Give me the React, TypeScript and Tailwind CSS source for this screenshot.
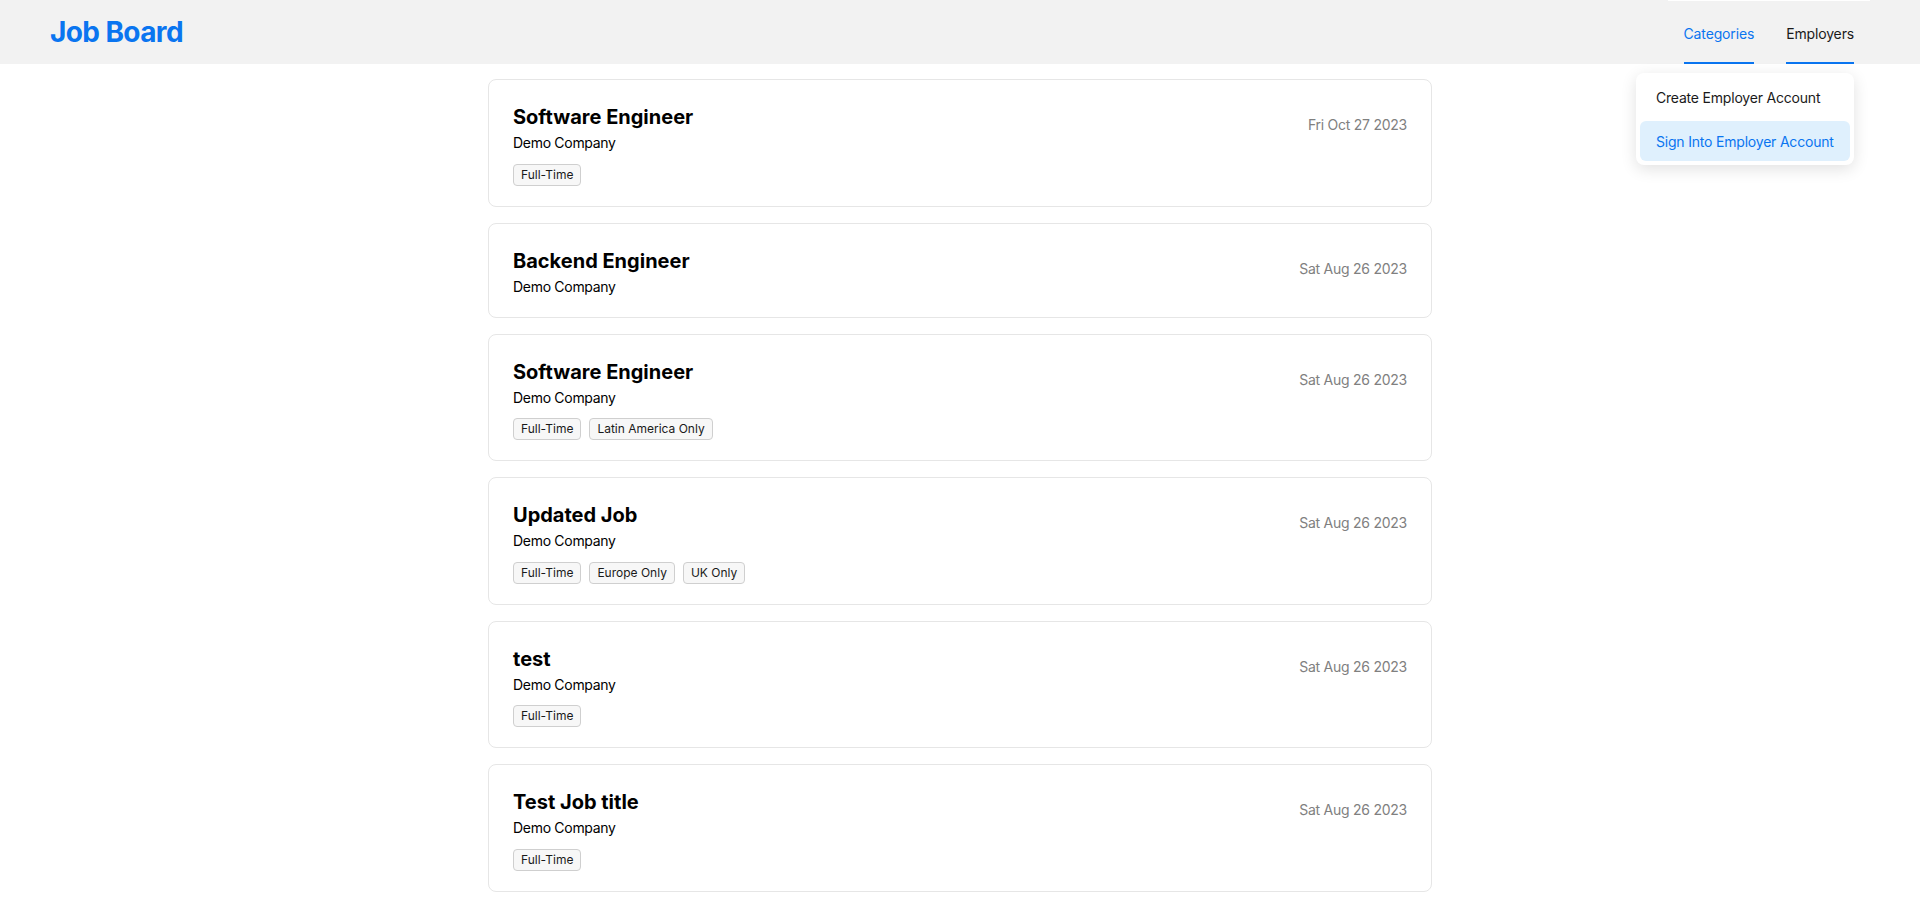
import React from "react";

type Job = { title: string; date: string; tags: string[] };

const jobs: Job[] = [
  { title: "Software Engineer", date: "Fri Oct 27 2023", tags: ["Full-Time"] },
  { title: "Backend Engineer", date: "Sat Aug 26 2023", tags: [] },
  { title: "Software Engineer", date: "Sat Aug 26 2023", tags: ["Full-Time", "Latin America Only"] },
  { title: "Updated Job", date: "Sat Aug 26 2023", tags: ["Full-Time", "Europe Only", "UK Only"] },
  { title: "test", date: "Sat Aug 26 2023", tags: ["Full-Time"] },
  { title: "Test Job title", date: "Sat Aug 26 2023", tags: ["Full-Time"] },
];

function JobCard({ job }: { job: Job }) {
  return (
    <div className="flex justify-between rounded-[8px] border border-[#e6e6e6] bg-white px-6 pt-[25px] pb-5">
      <div className="flex flex-col">
        <div className="text-[20px] leading-[24px] font-bold text-black">{job.title}</div>
        <div className="mt-[3px] text-[14px] leading-[21px] tracking-[-0.3px] text-black">Demo Company</div>
        {job.tags.length > 0 && (
          <div className="mt-[10.5px] flex gap-2">
            {job.tags.map((t, i) => (
              <span
                key={i}
                className="flex h-[22px] items-center rounded-[4px] border border-[#cfcfcf] bg-[#f7f7f7] px-[7px] text-[12px] text-[#1a1a1a]"
              >
                {t}
              </span>
            ))}
          </div>
        )}
      </div>
      <div className="mt-[9px] text-[14px] leading-[21px] tracking-[-0.25px] text-[#808080]">{job.date}</div>
    </div>
  );
}

export default function App() {
  return (
    <div className="min-h-screen bg-white" style={{ fontFamily: "Inter, 'Noto Sans', sans-serif" }}>
      <header className="relative flex h-[64px] items-center justify-between bg-[#f2f2f2] px-[50px]">
        <div className="text-[28px] font-bold tracking-[-0.6px] text-[#0a75f0]">Job Board</div>
        <nav className="relative flex h-full items-stretch gap-8 border-t border-white px-4">
          <div className="flex items-center border-b-2 border-[#0a75f0] pt-[3px] text-[14px] tracking-[-0.15px] text-[#0a75f0]">Categories</div>
          <div className="flex items-center border-b-2 border-[#0a75f0] pt-[3px] text-[14px] tracking-[-0.15px] text-[#1a1a1a]">Employers</div>
          <div className="absolute top-[72px] right-4 z-10 flex w-[218px] flex-col gap-1 rounded-[8px] bg-white p-1 shadow-[0_4px_16px_rgba(0,0,0,0.12)]">
            <div className="flex h-[40px] items-center whitespace-nowrap rounded-[6px] px-4 text-[14px] tracking-[-0.2px] text-[#1a1a1a]">Create Employer Account</div>
            <div className="flex h-[40px] items-center whitespace-nowrap rounded-[6px] bg-[#dff0fd] px-4 text-[14px] tracking-[-0.2px] text-[#0a75f0]">Sign Into Employer Account</div>
          </div>
        </nav>
      </header>
      <main className="mx-auto mt-[15px] flex w-[944px] flex-col gap-4 pb-6">
        {jobs.map((j, i) => (
          <JobCard key={i} job={j} />
        ))}
      </main>
    </div>
  );
}
